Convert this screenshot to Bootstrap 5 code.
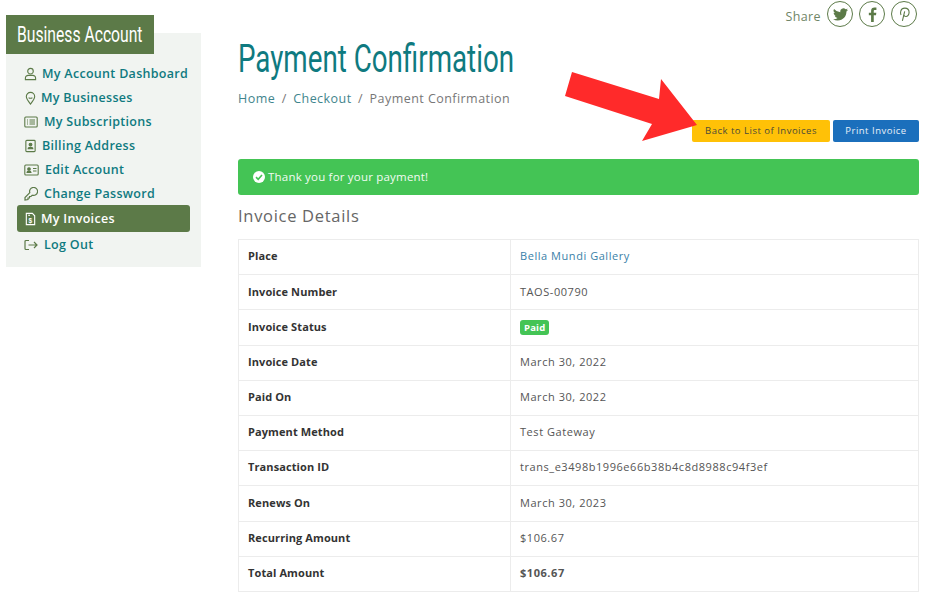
<!DOCTYPE html>
<html lang="en"><head><meta charset="utf-8"><title>Payment Confirmation</title>
<link rel="stylesheet" href="https://cdn.jsdelivr.net/npm/bootstrap@5.3.0/dist/css/bootstrap.min.css">
<style>
body{font-family:"Open Sans","Noto Sans",sans-serif;font-size:11px;color:#555;background:#fff;width:950px;height:612px;overflow:hidden;position:relative}
.pg-wrap{padding-left:6px}
.side-panel{width:195px;height:234px;margin-top:33px;background:#f1f4f1;flex:none}
.side-ribbon{width:148px;height:39px;margin-top:-18px;background:#5c7a48;color:#fff;font-family:"Roboto","Liberation Sans",sans-serif;font-size:21.500px;line-height:39px;padding-left:11px;white-space:nowrap}
.narrow-txt{display:inline-block;transform:scaleX(.73);transform-origin:left center}
.side-list{padding:8px 11px 0 11px;list-style:none;margin:0}
.side-list a{display:flex;align-items:center;height:24px;padding-left:7px;gap:5px;color:#0f7a80;font-weight:600;font-size:12.500px;letter-spacing:.3px;text-decoration:none;white-space:nowrap}
.side-list a.on{background:#5c7a48;color:#fff;border-radius:3px;height:27px;margin-top:-1px;margin-bottom:1px;padding-top:1px}
.side-list svg{flex:none;width:13px;height:14px}
.side-list a.gap-s{gap:4px}
.side-list a.gap-l{gap:6px}
.ic-w14{width:14px!important}
.ic-w15{width:15px!important}
.main-col{width:681px;margin-left:37px;flex:none}
.share-row{height:27px;padding-top:1px;padding-right:2px;gap:6px;color:#6f8566;font-size:12.500px}
.share-txt{padding-top:7px;letter-spacing:.4px}
.share-ic{width:26px;height:26px;border:1.2px solid #5c7a48;border-radius:50%;display:flex;align-items:center;justify-content:center}
.pg-title{font-family:"Roboto","Liberation Sans",sans-serif;font-size:38px;line-height:44px;color:#0f7a80;margin:10px 0 0;font-weight:400;white-space:nowrap}
.crumb{font-size:12.500px;letter-spacing:.45px;margin:8px 0 0;line-height:20px;--bs-breadcrumb-item-padding-x:6.500px;--bs-breadcrumb-divider-color:#777;--bs-breadcrumb-item-active-color:#777}
.crumb a{color:#3f858d;text-decoration:none}
.act-row{margin-top:11px;gap:3px}
.act-btn{font-size:9.500px;letter-spacing:.5px;height:22px;padding:0;line-height:22px;border-radius:2px;border:0}
.act-back{width:138px;background:#ffc107;color:#4a4a3a}
.act-print{width:86px;background:#1b6fbc;color:#e8f0f8}
.ok-box{height:36px;margin-top:17px;background:#44c455;color:#f2fbf3;border-radius:3px;padding:0 15px;gap:3px;font-size:11.500px;letter-spacing:.2px}
.sec-title{font-size:16.500px;font-weight:400;color:#666;margin:11px 0 0;line-height:20px;height:33px;letter-spacing:.7px}
.inv-table{width:681px;table-layout:fixed;margin:0;font-size:11px;color:#555;letter-spacing:.55px}
.inv-table th,.inv-table td{height:35.2px;padding:0 9px 1px;vertical-align:middle;border:1px solid #ececec}
.inv-table th{width:272px;font-weight:700;color:#333;font-size:11px;letter-spacing:.1px}
.inv-table a{color:#3a7fa8;text-decoration:none}
.paid-tag{background:#44c455;color:#fff;font-size:9.500px;letter-spacing:.2px;padding:2px 4px;font-weight:700;border-radius:3px;display:inline-block;line-height:11px}
.arrow-over{position:absolute;left:0;top:0;pointer-events:none}
</style></head><body>
<div class="d-flex align-items-start pg-wrap">
<aside class="side-panel">
<div class="side-ribbon"><span class="narrow-txt">Business Account</span></div>
<ul class="side-list">
<li><a href="#"><svg viewBox="0 0 14 14" fill="none" stroke="#5c7a48" stroke-width="1.2"><circle cx="7" cy="4" r="3"/><path d="M1.5 13v-1.5a3 3 0 0 1 3-3h5a3 3 0 0 1 3 3V13z"/></svg>My Account Dashboard</a></li>
<li><a href="#" class="gap-s"><svg viewBox="0 0 14 14" fill="none" stroke="#5c7a48" stroke-width="1.2"><path d="M7 13.5C4 10 2.5 8 2.5 5.5a4.5 4.5 0 0 1 9 0C11.500 8 10 10 7 13.500z"/><path d="M5 6.500c1 1 3 1 4 0"/></svg>My Businesses</a></li>
<li><a href="#" class="gap-l"><svg class="ic-w14" viewBox="0 0 14 14" fill="none" stroke="#5c7a48" stroke-width="1.1"><rect x=".8" y="2" width="12.400" height="10" rx="1"/><path d="M3 5h1M5.500 5H11M3 7h1M5.500 7H11M3 9h1M5.500 9H11"/></svg>My Subscriptions</a></li>
<li><a href="#"><svg viewBox="0 0 14 14" fill="none" stroke="#5c7a48" stroke-width="1.2"><rect x="2" y="1" width="10" height="12" rx="1"/><circle cx="7" cy="5.500" r="1.500" fill="#5c7a48"/><path d="M4.500 10c0-2 5-2 5 0z" fill="#5c7a48"/></svg>Billing Address</a></li>
<li><a href="#" class="gap-l"><svg class="ic-w15" viewBox="0 0 15 14" fill="none" stroke="#5c7a48" stroke-width="1.1"><rect x=".8" y="2" width="13.400" height="10" rx="1"/><circle cx="5" cy="6" r="1.300" fill="#5c7a48"/><path d="M3 9.500c0-2 4-2 4 0zM9 5.500h3.500M9 8h3.500" fill="#5c7a48"/></svg>Edit Account</a></li>
<li><a href="#" class="gap-l"><svg class="ic-w14" viewBox="0 0 14 14" fill="none" stroke="#5c7a48" stroke-width="1.2"><path d="M1 13v-2.500l4.800-4.800a4 4 0 1 1 2.500 2.500L7 9.500H5.500V11H4v1.500z"/></svg>Change Password</a></li>
<li><a href="#" class="on gap-s"><svg viewBox="0 0 14 14" fill="none" stroke="#fff" stroke-width="1.200"><path d="M2.500 1h6.500l2.500 2.500V13h-9z"/><path d="M4.500 3h2" /><text x="7" y="11.500" font-size="7" fill="#fff" stroke="none" text-anchor="middle" font-family="Liberation Sans">$</text></svg>My Invoices</a></li>
<li><a href="#" class="gap-l"><svg class="ic-w14" viewBox="0 0 14 14" fill="none" stroke="#5c7a48" stroke-width="1.200"><path d="M5 2.500H2a1 1 0 0 0-1 1v7a1 1 0 0 0 1 1h3M4.500 7h8.500M10 4l3 3-3 3"/></svg>Log Out</a></li>
</ul>
</aside>
<main class="main-col">
<div class="d-flex justify-content-end share-row">
<span class="share-txt">Share</span>
<span class="share-ic"><svg width="15" height="13" viewBox="0 0 24 20" fill="#5c7a48"><path d="M24 2.400a9.800 9.800 0 0 1-2.800.8A4.900 4.900 0 0 0 23.300.500a9.800 9.800 0 0 1-3.100 1.200 4.900 4.900 0 0 0-8.400 4.500A14 14 0 0 1 1.700 1a4.900 4.900 0 0 0 1.500 6.600 4.900 4.900 0 0 1-2.200-.6c0 2.400 1.700 4.400 3.900 4.900a4.900 4.900 0 0 1-2.200.1 4.900 4.900 0 0 0 4.600 3.400A9.900 9.900 0 0 1 0 17.400 14 14 0 0 0 7.500 19.600c9.100 0 14.300-7.700 14-14.600A10 10 0 0 0 24 2.400z"/></svg></span>
<span class="share-ic"><svg width="9" height="15" viewBox="0 0 10 18" fill="#5c7a48"><path d="M6.500 18V10h2.700l.4-3.100H6.500V5c0-.9.300-1.500 1.600-1.500h1.600V.7C9.400.7 8.400.600 7.300.600 4.900.600 3.300 2 3.300 4.700v2.200H.6V10h2.700v8z"/></svg></span>
<span class="share-ic"><svg width="11" height="15" viewBox="0 0 12 16" fill="none" stroke="#5c7a48" stroke-width="1.200"><path d="M2.200 8.500C1.200 6.500 1.300 1 6.300 1c3.500 0 4.700 2.500 4.700 4.500 0 3-1.700 4.700-3.500 4.700-1.300 0-2-.8-2.200-1.500M6.200 4.500 3.700 15"/></svg></span>
</div>
<h1 class="pg-title"><span class="narrow-txt">Payment Confirmation</span></h1>
<nav aria-label="breadcrumb"><ol class="breadcrumb crumb"><li class="breadcrumb-item"><a href="#">Home</a></li><li class="breadcrumb-item"><a href="#">Checkout</a></li><li class="breadcrumb-item active" aria-current="page">Payment Confirmation</li></ol></nav>
<div class="d-flex justify-content-end act-row">
<button class="btn act-btn act-back">Back to List of Invoices</button>
<button class="btn act-btn act-print">Print Invoice</button>
</div>
<div class="d-flex align-items-center ok-box" role="alert"><svg width="12" height="12" viewBox="0 0 12 12"><circle cx="6" cy="6" r="6" fill="#fff"/><path d="M3 6.200 5.200 8.300 9 4" fill="none" stroke="#44c455" stroke-width="1.600"/></svg><span>Thank you for your payment!</span></div>
<h2 class="sec-title">Invoice Details</h2>
<table class="table inv-table">
<tr><th>Place</th><td><a href="#">Bella Mundi Gallery</a></td></tr>
<tr><th>Invoice Number</th><td>TAOS-00790</td></tr>
<tr><th>Invoice Status</th><td><span class="paid-tag">Paid</span></td></tr>
<tr><th>Invoice Date</th><td>March 30, 2022</td></tr>
<tr><th>Paid On</th><td>March 30, 2022</td></tr>
<tr><th>Payment Method</th><td>Test Gateway</td></tr>
<tr><th>Transaction ID</th><td>trans_e3498b1996e66b38b4c8d8988c94f3ef</td></tr>
<tr><th>Renews On</th><td>March 30, 2023</td></tr>
<tr><th>Recurring Amount</th><td>$106.67</td></tr>
<tr><th>Total Amount</th><td><strong>$106.67</strong></td></tr>
</table>
</main>
</div>
<svg class="arrow-over" width="950" height="612" viewBox="0 0 950 612"><polygon points="572,72 565,96 652,124 642,141 697,125 661,79 659,99" fill="#ff2a2a"/></svg>
</body></html>
